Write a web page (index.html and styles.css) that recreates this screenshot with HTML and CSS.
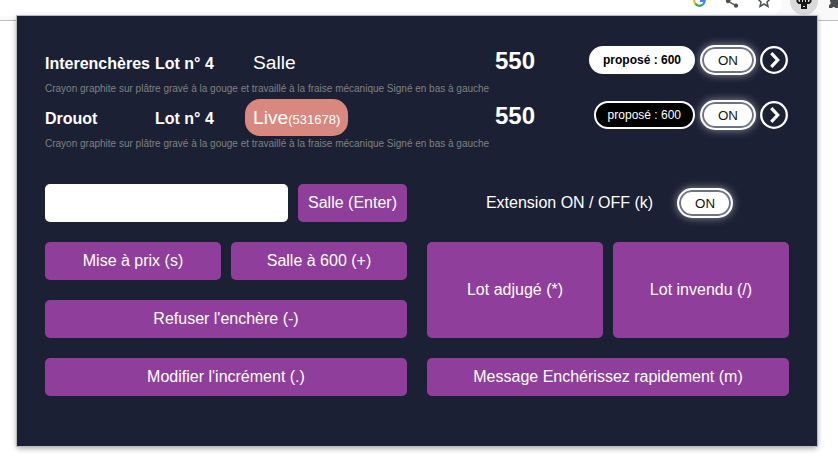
FILE: index.html
```html
<!DOCTYPE html>
<html lang="fr">
<head>
<meta charset="utf-8">
<title>Enchères</title>
<link rel="stylesheet" href="styles.css">
</head>
<body>
<header class="toolbar">
  <div class="omnibox"></div>
  <svg class="toolbar-icons" width="158" height="20" viewBox="0 0 158 20">
    <g fill="none" stroke-width="2.2">
      <path d="M15.3-2.5A5 5 0 0 0 15.3 3.7" stroke="#fbbc05"/>
      <path d="M15.3 3.7A5.2 5.2 0 0 0 22.8 4.6" stroke="#34a853"/>
      <path d="M22.8 4.6A5 5 0 0 0 24.7.8H20" stroke="#4285f4"/>
    </g>
    <path d="M57.5-4 48 1.2 56 5.6" fill="none" stroke="#5f6368" stroke-width="1.5"/>
    <circle cx="48" cy="1.2" r="2.1" fill="#4b4d50"/>
    <circle cx="56" cy="5.7" r="2.1" fill="#4b4d50"/>
    <path d="M84-6.5 86-1.2 90-.8 87 2 88 6.5 84 4 80 6.5 81 2 78-.8 82-1.2Z" fill="none" stroke="#505357" stroke-width="1.5"/>
    <circle cx="124" cy="1" r="14" fill="#dadada"/>
    <path d="M117.500-1v2.500l1.500 1.500h3V8h4V3h3l1.500-1.500V-1M121 0v2M127 0v2M124-1v7" fill="none" stroke="#161616" stroke-width="2"/>
    <path d="M150-1h8V8h-2.500a2 2 0 0 0-3.500 0H149V5a2 2 0 0 0 1-3.500Z" fill="#4b4d50"/>
  </svg>
</header>
<main class="popup">
  <section class="lot">
    <div class="lot-row">
      <strong class="site">Interenchères</strong>
      <strong class="number">Lot n° 4</strong>
      <div class="origin"><span class="bidder">Salle</span></div>
      <strong class="price">550</strong>
      <div class="actions">
        <span class="proposal proposal-active">proposé : 600</span>
        <button class="toggle">ON</button>
        <svg class="next" width="28" height="28" viewBox="0 0 28 28"><circle cx="14" cy="14" r="12.800"/><path d="M11.300 7.200 17.700 14 11.300 20.800"/></svg>
      </div>
    </div>
    <p class="description">Crayon graphite sur plâtre gravé à la gouge et travaillé à la fraise mécanique Signé en bas à gauche</p>
  </section>
  <section class="lot">
    <div class="lot-row">
      <strong class="site">Drouot</strong>
      <strong class="number">Lot n° 4</strong>
      <div class="origin"><span class="bidder bidder-live">Live<small>(531678)</small></span></div>
      <strong class="price">550</strong>
      <div class="actions">
        <span class="proposal">proposé : 600</span>
        <button class="toggle">ON</button>
        <svg class="next" width="28" height="28" viewBox="0 0 28 28"><circle cx="14" cy="14" r="12.800"/><path d="M11.300 7.200 17.700 14 11.300 20.800"/></svg>
      </div>
    </div>
    <p class="description">Crayon graphite sur plâtre gravé à la gouge et travaillé à la fraise mécanique Signé en bas à gauche</p>
  </section>
  <section class="controls">
    <div class="column">
      <div class="line"><input class="amount" type="text"><button class="btn btn-enter">Salle (Enter)</button></div>
      <div class="line"><button class="btn">Mise à prix (s)</button><button class="btn">Salle à 600 (+)</button></div>
      <button class="btn">Refuser l'enchère (-)</button>
      <button class="btn">Modifier l'incrément (.)</button>
    </div>
    <div class="column">
      <div class="line extension"><span>Extension ON / OFF (k)</span><button class="toggle">ON</button></div>
      <div class="line line-tall"><button class="btn">Lot adjugé (*)</button><button class="btn">Lot invendu (/)</button></div>
      <button class="btn">Message Enchérissez rapidement (m)</button>
    </div>
  </section>
</main>
</body>
</html>
```

FILE: styles.css
```css
* { box-sizing: border-box; }

body {
  margin: 0;
  height: 457px;
  overflow: hidden;
  background: #fff;
  font-family: "Liberation Sans", Arial, sans-serif;
  font-size: 16px;
  color: #fff;
}

button, input { font: inherit; margin: 0; }

.toolbar {
  display: flex;
  height: 21px;
  background: #f9f9f9;
  border-bottom: 1px solid #bdbdbd;
}

.omnibox {
  width: 782px;
  height: 16px;
  margin-right: -102px;
  background: #fff;
  border-radius: 0 0 14px 0;
}

.toolbar-icons { position: relative; flex: none; }

.popup {
  position: relative;
  width: 800px;
  height: 430px;
  margin: -5px 0 0 17px;
  padding: 28px;
  background: #1b2035;
  box-shadow: 0 0 0 1px #b9bbbd, 0 2px 6px rgba(0, 0, 0, .4);
}

.lot { height: 55px; }

.lot-row {
  display: grid;
  grid-template-columns: 110px 90px 250px 60px 1fr;
  align-items: center;
  height: 37px;
  white-space: nowrap;
}

.site, .number { padding-top: 2px; }

.bidder {
  display: inline-block;
  height: 37px;
  padding: 0 8px;
  line-height: 38px;
  font-size: 19.200px;
}

.bidder-live { background: #d98880; border-radius: 15px; }
.bidder small { font-size: 13px; }
.origin { height: 37px; }

.price { font-size: 24px; padding-bottom: 4px; }

.actions {
  display: flex;
  justify-content: flex-end;
  align-items: center;
  gap: 5px;
  padding: 0 1px 5px 0;
}

.proposal {
  height: 28px;
  padding: 0 12px;
  border: 2px solid #fff;
  border-radius: 14px;
  background: #000;
  font-size: 12px;
  line-height: 24px;
}

.proposal-active { background: #fff; color: #000; font-weight: bold; }

.toggle {
  width: 56px;
  height: 30px;
  padding: 1px 0 0;
  border: 2px solid #fff;
  border-radius: 15px;
  background: #fff;
  color: #111;
  font-size: 13.330px;
  box-shadow: inset 0 0 0 2px #6f7385, 0 0 8px rgba(255, 255, 255, .5);
}

.next { margin-left: -1px; fill: none; stroke: #fff; stroke-width: 2.300; }
.next path { stroke-width: 3.200; }

.description {
  margin: 0;
  padding-top: 1px;
  font-size: 10px;
  line-height: 14px;
  color: #808080;
}

.controls {
  display: grid;
  grid-template-columns: 362px 362px;
  gap: 20px;
  margin-top: 30px;
}

.column { display: flex; flex-direction: column; gap: 20px; }
.line { display: flex; gap: 10px; height: 38px; }
.line-tall { height: 96px; }
.line .btn { flex: 1; }
.line .btn-enter { flex: 0 0 109px; }

.btn {
  height: 38px;
  padding: 0;
  border: 0;
  border-radius: 5px;
  background: #8f3e9b;
  color: #fff;
  white-space: nowrap;
}

.line-tall .btn { height: 96px; }
.amount { width: 243px; border: 0; border-radius: 5px; background: #fff; padding: 0 8px; }
.extension { align-items: center; justify-content: center; gap: 24px; padding-left: 3px; }
```
